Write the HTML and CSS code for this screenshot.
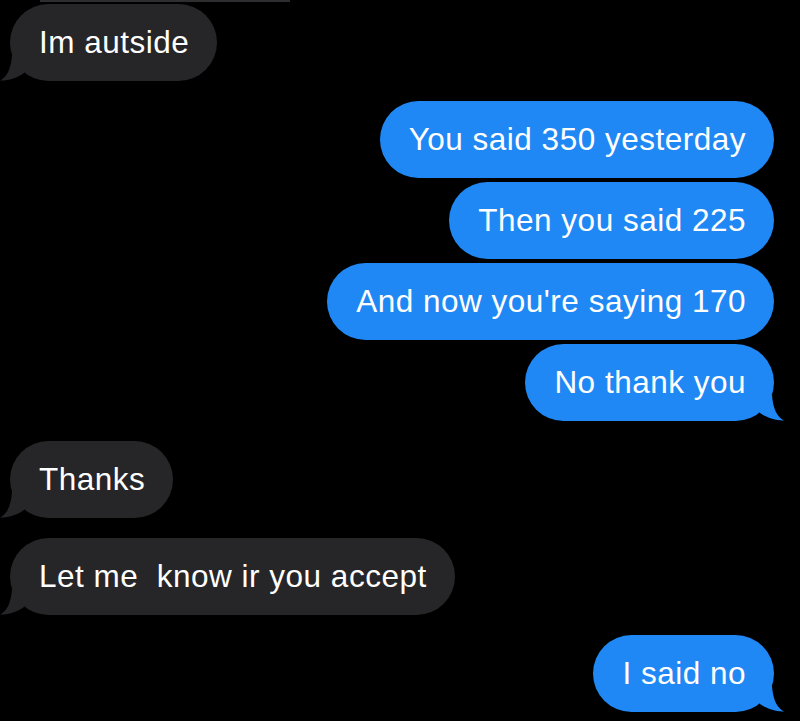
FILE: index.html
```html
<!DOCTYPE html>
<html>
<head>
<meta charset="utf-8">
<link rel="stylesheet" href="styles.css">
</head>
<body>
<div class="thread">
  <div class="prev-edge"></div>

  <div class="row in first">
    <div class="bubble grey">Im autside<svg class="tail" viewBox="0 0 30 26"><path d="M12 0 C11 14 7 22 0 25.5 C7 26 17 23 24 18 L30 10 L30 0 Z"/></svg></div>
  </div>

  <div class="row out group">
    <div class="bubble blue">You said 350 yesterday</div>
  </div>
  <div class="row out">
    <div class="bubble blue">Then you said 225</div>
  </div>
  <div class="row out">
    <div class="bubble blue">And now you're saying 170</div>
  </div>
  <div class="row out">
    <div class="bubble blue">No thank you<svg class="tail" viewBox="0 0 30 26"><path d="M12 0 C11 14 7 22 0 25.5 C7 26 17 23 24 18 L30 10 L30 0 Z"/></svg></div>
  </div>

  <div class="row in group">
    <div class="bubble grey">Thanks<svg class="tail" viewBox="0 0 30 26"><path d="M12 0 C11 14 7 22 0 25.5 C7 26 17 23 24 18 L30 10 L30 0 Z"/></svg></div>
  </div>
  <div class="row in group">
    <div class="bubble grey">Let me&nbsp; know ir you accept<svg class="tail" viewBox="0 0 30 26"><path d="M12 0 C11 14 7 22 0 25.5 C7 26 17 23 24 18 L30 10 L30 0 Z"/></svg></div>
  </div>

  <div class="row out group">
    <div class="bubble blue">I said no<svg class="tail" viewBox="0 0 30 26"><path d="M12 0 C11 14 7 22 0 25.5 C7 26 17 23 24 18 L30 10 L30 0 Z"/></svg></div>
  </div>
</div>
</body>
</html>
```

FILE: styles.css
```css
html, body {
  margin: 0;
  padding: 0;
  background: #000;
}

body {
  width: 800px;
  height: 721px;
  overflow: hidden;
  font-family: "Liberation Sans", Arial, sans-serif;
}

.thread {
  display: flex;
  flex-direction: column;
  gap: 4px;
}

.prev-edge {
  margin-left: 40px;
  width: 250px;
  height: 2px;
  background: #2e2e30;
  margin-bottom: -2px;
}

.row {
  display: flex;
}

.row.in {
  justify-content: flex-start;
  padding-left: 10px;
}

.row.out {
  justify-content: flex-end;
  padding-right: 26px;
}

.row.group {
  margin-top: 16px;
}

.bubble {
  position: relative;
  display: flex;
  align-items: center;
  height: 77px;
  padding: 0 28px 0 29px;
  border-radius: 39px;
  font-size: 31.5px;
  letter-spacing: 0.5px;
  color: #fff;
  white-space: nowrap;
  box-sizing: border-box;
}

.bubble.grey {
  background: #262628;
}

.bubble.blue {
  background: #2088f4;
}

.tail {
  position: absolute;
  bottom: 0;
  width: 30px;
  height: 26px;
}

.grey .tail {
  left: -10px;
  fill: #262628;
}

.blue .tail {
  right: -10px;
  fill: #2088f4;
  transform: scaleX(-1);
}
```
